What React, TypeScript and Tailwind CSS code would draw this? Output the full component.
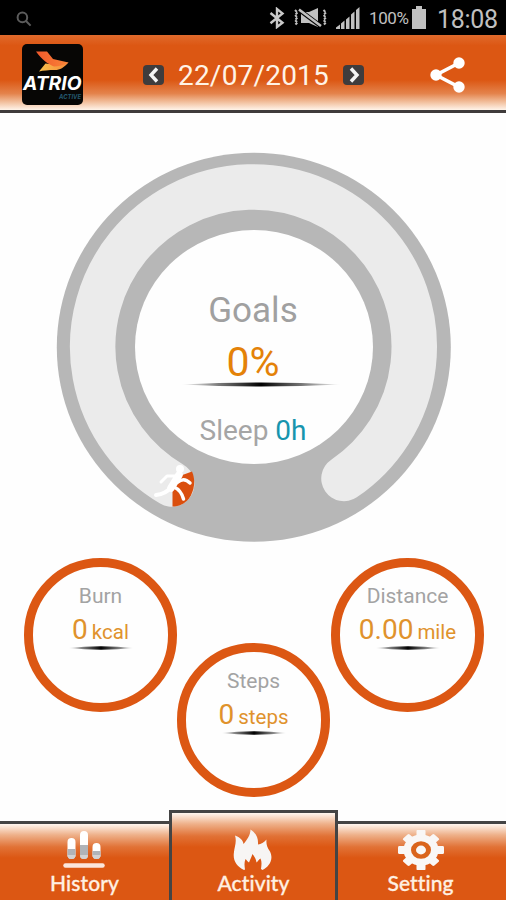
import type { ReactNode } from "react";

function StatusBar() {
  return (
    <div className="flex h-[35px] shrink-0 items-center bg-black text-[#c0c0c0]">
      <svg className="ml-4 mt-0.5 h-4 w-4" viewBox="0 0 16 16" fill="none" stroke="#5c5c5c" strokeWidth="2">
        <circle cx="6.4" cy="6.4" r="4.8" />
        <path d="M10 10l4.6 4.6" />
      </svg>
      <svg className="ml-[237px] h-[22px] w-4" viewBox="0 0 16 22" fill="none" stroke="#c9c9c9" strokeWidth="2.4">
        <path d="M1.500 6L13.500 15.800L8 20V2L13.500 6.400L1.500 16.200" />
      </svg>
      <svg className="ml-[8px] h-[22px] w-[35px]" viewBox="0 0 35 22" fill="none" stroke="#c0c0c0">
        <path d="M2 3l2.500 2.500L2 8l2.500 2.500L2 13l2.500 2.500L2 18M30.500 3l2.500 2.500L30.500 8l2.500 2.500L30.500 13l2.500 2.500L30.500 18" strokeWidth="2" strokeDasharray="2.6 1" />
        <path d="M8 5h8l9-4v19l-9-4H8z" fill="#c0c0c0" stroke="none" />
        <path d="M7 3.500l22 16.500" stroke="#000" strokeWidth="4.500" />
        <path d="M6 2.500l22 16.500" strokeWidth="2.6" />
      </svg>
      <svg className="ml-[8px] h-6 w-6" viewBox="0 0 24 24" fill="#c0c0c0">
        <path d="M0 23v-1.500l4-3V23zM5 23v-5.500l3.500-3V23zM10 23V13.500l3.500-3V23zM15 23V8.500l3.500-3V23zM20 23V4l3.500-3V23z" />
      </svg>
      <span className="ml-[9px] mt-[2px] w-[40px] text-[17px] leading-none tracking-[-0.4px]">100%</span>
      <svg className="ml-[2px] h-[23px] w-4" viewBox="0 0 16 23" fill="#c0c0c0">
        <path d="M5 0h6v3h4v20H1V3h4z" />
      </svg>
      <span className="ml-[10px] mt-[3px] text-[25px] leading-none tracking-[-0.3px]">18:08</span>
    </div>
  );
}

function Logo() {
  return (
    <svg className="h-[61px] w-[61px]" viewBox="0 0 61 61">
      <defs>
        <linearGradient id="wing" x1="0" x2="1">
          <stop offset="0" stopColor="#f1582b" />
          <stop offset="1" stopColor="#f98538" />
        </linearGradient>
        <linearGradient id="tail" x1="0" x2="1">
          <stop offset="0" stopColor="#f8c04c" />
          <stop offset="1" stopColor="#f5893a" />
        </linearGradient>
      </defs>
      <rect width="61" height="61" rx="5" fill="#070605" />
      <path d="M17 27.500L23.500 19.500C30 20.500 38 20 46.500 18.500C42 23.500 38 26 33 26C27 26 21 26.500 17 27.500Z" fill="url(#tail)" />
      <path d="M14 7.500H25L31 15L46.500 18.500C42 21 37 22.500 32 22.500C26 20 20 16 14 7.500Z" fill="url(#wing)" />
      <text x="1" y="45.500" fill="#fff" fontFamily="Inter, sans-serif" fontWeight="700" fontStyle="italic" fontSize="18.500" textLength="58.500" lengthAdjust="spacingAndGlyphs">
        ATRIO
      </text>
      <text x="37" y="54.500" fill="#24596f" fontFamily="Inter, sans-serif" fontWeight="700" fontStyle="italic" fontSize="6.500" textLength="22" lengthAdjust="spacingAndGlyphs">
        ACTIVE
      </text>
    </svg>
  );
}

function Arrow({ d }: { d: string }) {
  return (
    <button className="flex h-5 w-[21px] items-center justify-center rounded-[4px] bg-[#3f3c3d]">
      <svg className="h-5 w-5" viewBox="0 0 20 20" fill="none" stroke="#f4f4f4" strokeWidth="3.4">
        <path d={d} />
      </svg>
    </button>
  );
}

function Header() {
  return (
    <header className="flex h-[78px] shrink-0 items-center border-b-[3px] border-[#3f3b3b] bg-[linear-gradient(to_bottom,#e06a2c_0%,#dc5713_14%,#dc5713_60%,#e4834c_78%,#f0b893_88%,#fff4ea_100%)] pl-[22px]">
      <div className="mt-[3px]"><Logo /></div>
      <div className="ml-[60px] mt-[4px] flex items-center">
        <Arrow d="M13 3.500L7 10l6 6.500" />
        <span className="ml-[14px] mt-[2px] w-[165px] text-[28px] leading-none tracking-[0.2px] text-[#fff3e6]">22/07/2015</span>
        <Arrow d="M7 3.500l6 6.500-6 6.500" />
      </div>
      <svg className="ml-[66px] mt-[4px] h-[36px] w-[36px]" viewBox="0 0 36 36" fill="#fff" stroke="#fff">
        <path d="M29 6L6 18l23 12" fill="none" strokeWidth="3.600" />
        <circle cx="29" cy="6" r="5.700" stroke="none" />
        <circle cx="6" cy="18" r="5.700" stroke="none" />
        <circle cx="29" cy="30" r="5.700" stroke="none" />
      </svg>
    </header>
  );
}

function Shadow({ className }: { className: string }) {
  return (
    <svg className={className} viewBox="0 0 160 6" preserveAspectRatio="none">
      <defs>
        <linearGradient id="fade">
          <stop offset="0" stopColor="#000" stopOpacity="0" />
          <stop offset=".2" stopColor="#000" stopOpacity=".45" />
          <stop offset=".5" stopColor="#000" />
          <stop offset=".8" stopColor="#000" stopOpacity=".45" />
          <stop offset="1" stopColor="#000" stopOpacity="0" />
        </linearGradient>
      </defs>
      <path d="M0 3Q80-2 160 3Q80 8 0 3Z" fill="url(#fade)" />
    </svg>
  );
}

function Gauge() {
  return (
    <section className="ml-[56px] mt-[39px] grid h-[390px] w-[396px]">
      <svg className="col-start-1 row-start-1 h-[390px] w-[396px]" viewBox="56 152 396 390">
        <ellipse cx="253.800" cy="347.200" rx="197" ry="194.500" fill="#b7b7b7" />
        <path d="M171.600 484A160.800 159.600 0 1 1 344 478.500" fill="none" stroke="#ebebeb" strokeWidth="45.500" strokeLinecap="round" />
        <ellipse cx="254" cy="347" rx="119" ry="117" fill="#fefefe" />
        <path d="M172.500 506.500V489L177 477L192 471.500C195.500 479 195 490 189 498.500C184.500 504 179 506.500 172.500 506.500Z" fill="#da4f0e" />
        <g fill="none" stroke="#fff" strokeLinecap="round" strokeLinejoin="round">
          <path d="M179 475L171 488" strokeWidth="7.500" />
          <path d="M177 476L167 476L161 482" strokeWidth="3" />
          <path d="M178 482Q184 477 190 483" strokeWidth="3.500" />
          <path d="M174 487Q181 490 183.500 499" strokeWidth="3.500" />
          <path d="M171 487Q166 494 156 495" strokeWidth="4" />
        </g>
        <circle cx="180" cy="469" r="4" fill="#fff" />
      </svg>
      <div className="col-start-1 row-start-1 flex flex-col items-center pt-[139px] pr-0.5">
        <span className="h-[40px] text-[35px] leading-[40px] text-[#a0a0a0]">Goals</span>
        <span className="mt-[10px] h-[42px] text-[41px] leading-[42px] text-[#e48208]">0%</span>
        <Shadow className="ml-[16px] mt-[-1px] h-[5px] w-[160px]" />
        <p className="mt-[26px] h-[36px] text-[28px] leading-[36px] text-[#a5a5a5]">
          Sleep <span className="text-[#1795ae]">0h</span>
        </p>
      </div>
    </section>
  );
}

function Metric({ label, value, unit, className = "" }: { label: string; value: string; unit: string; className?: string }) {
  return (
    <div className={`flex h-[154px] w-[153px] flex-col items-center rounded-full border-[9px] border-[#dc5713] bg-[#fefefe] pt-[16px] ${className}`}>
      <span className="h-[26px] text-[21px] leading-[26px] text-[#a3a3a3]">{label}</span>
      <p className="mt-[4px] h-[34px] text-[28px] leading-[34px] whitespace-nowrap text-[#e0922c]">
        {value}
        <span className="ml-[4px] text-[20.5px]">{unit}</span>
      </p>
      <Shadow className="h-[4px] w-[66px] -mt-px" />
    </div>
  );
}

function HistoryIcon() {
  return (
    <svg className="h-[40px] w-[46px]" viewBox="0 0 46 40">
      <g strokeWidth="8" strokeLinecap="round">
        <path d="M9.500 12v13M22 5v20M34.500 17v8" stroke="#fff" />
      </g>
      <path d="M5.500 19h8v6a4 4 0 0 1-8 0zM18 15h8v10a4 4 0 0 1-8 0zM30.500 21h8v4a4 4 0 0 1-8 0z" fill="#b0b3b8" />
      <path d="M5.500 25h8a4 4 0 0 1-8 0zM18 25h8a4 4 0 0 1-8 0zM30.500 25h8a4 4 0 0 1-8 0z" fill="#d3d2d3" />
      <path d="M3.500 35.500h37" stroke="#fbe6dc" strokeWidth="4.500" strokeLinecap="round" />
    </svg>
  );
}

function FlameIcon() {
  return (
    <svg className="h-[41px] w-[40px] -translate-x-px" viewBox="0 0 40 41" fill="#f7f5f4">
      <path d="M11 41C4 38 0 32 .8 24.500C1.500 17 4 13 2 6.500C7 8.500 10 11 10.500 15C14 11 17.500 6 17.500 .5C23 4 25.500 9 25 15.500C28 15 31 13.500 33.500 10.500C33 15 34 18.500 37 22.500C41 30.500 36 38 29.500 41L28 40C28.500 36 29 33 27.500 29.500C26 30.500 25 32 23.500 33.500C23 30 21.500 27.500 19.500 25C18.500 28 17.500 30 16 33.500C14.500 32.500 14 31.500 12.500 30C11 33.500 11.500 37 12 40.500Z" />
    </svg>
  );
}

function GearIcon() {
  return (
    <svg className="h-[40px] w-[46px]" viewBox="-23 -20 46 40" fill="#f9f7f6">
      <g transform="scale(1 .88)">
        <circle r="17.500" />
        <rect x="-4.500" y="-23" width="9" height="46" rx="1.500" />
        <rect x="-4.500" y="-22" width="9" height="44" rx="1.500" transform="rotate(45)" />
        <rect x="-4.500" y="-23" width="9" height="46" rx="1.500" transform="rotate(90)" />
        <rect x="-4.500" y="-22" width="9" height="44" rx="1.500" transform="rotate(135)" />
        <circle r="7.500" fill="none" stroke="#da641c" strokeWidth="5" />
      </g>
    </svg>
  );
}

function Tab({ label, icon, className }: { label: string; icon: ReactNode; className: string }) {
  return (
    <button className={`flex flex-col items-center border-[#444] bg-[linear-gradient(to_bottom,#fff6ef_0px,#eeb089_11px,#e17236_23px,#dc5713_34px)] ${className}`}>
      {icon}
      <span className="mt-px h-[24px] font-['Lato'] text-[21px] leading-[24px] font-medium tracking-[0.1px] text-[#fff0e2] [-webkit-text-stroke:0.3px_#fff0e2]">{label}</span>
    </button>
  );
}

export default function App() {
  return (
    <div className="flex h-[900px] w-[506px] flex-col overflow-hidden bg-[#fefefe] font-['Roboto']">
      <StatusBar />
      <Header />
      <main className="flex flex-1 flex-col">
        <Gauge />
        <section className="mt-[16px] flex items-start pl-[24px]">
          <Metric label="Burn" value="0" unit="kcal" />
          <Metric label="Steps" value="0" unit="steps" className="mt-[85px]" />
          <Metric label="Distance" value="0.00" unit="mile" className="ml-px" />
        </section>
      </main>
      <nav className="flex h-[90px] shrink-0 items-end">
        <Tab label="History" icon={<HistoryIcon />} className="h-[79px] w-[169px] border-t-[3px] pt-[6px]" />
        <Tab label="Activity" icon={<FlameIcon />} className="h-[90px] w-[169px] border-x-[3px] border-t-[3px] pt-[16px]" />
        <Tab label="Setting" icon={<GearIcon />} className="h-[79px] w-[168px] border-t-[3px] pt-[6px] pr-[3px]" />
      </nav>
    </div>
  );
}
